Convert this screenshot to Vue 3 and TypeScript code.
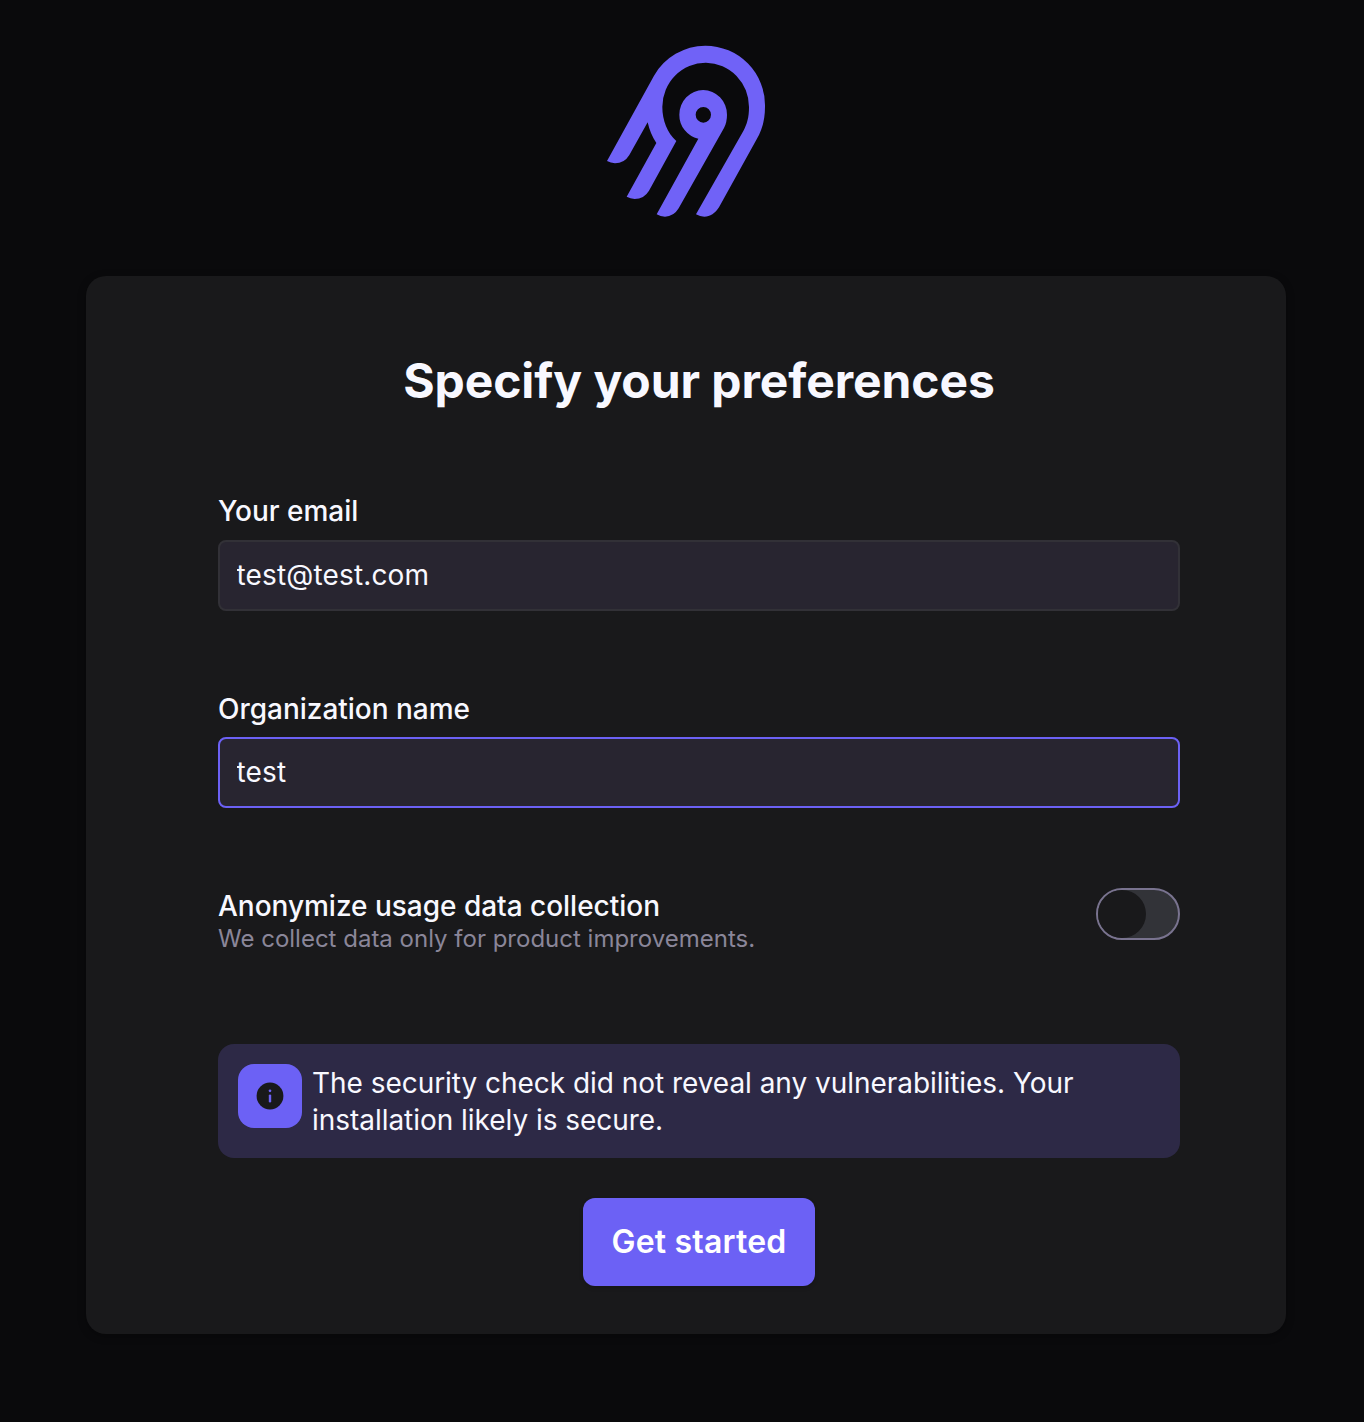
<script setup lang="ts">
import { ref } from 'vue'

const email = ref('test@test.com')
const organization = ref('test')
const anonymize = ref(false)
</script>

<template>
  <main class="page">
    <svg class="logo" viewBox="0 0 600 600" aria-hidden="true">
      <path d="M51 393 L192 137 A179 179 0 0 1 346 47 A179 179 0 0 1 525 230 C525 270 516 300 500 328 L387 532 C376 550 360 560 343 560 Q330 560 318 553 L460 303 C471 283 477 262 477 232 A130 133 0 0 0 217 230 C217 272 232 308 259 333 L177 482 Q162 507 134 507 Q121 506 110 500 L199 339 Q181 313 173 277 L118 375 Q103 400 75 400 Q62 399 51 393 Z" />
      <path fill-rule="evenodd" d="M325 326 A73 73 0 0 1 268 254 A71.5 74 0 0 1 411 254 Q411 277 402 294 L266 535 Q251 560 225 560 Q211 560 200 553 Z M340 231 A23 23.5 0 1 0 340 278 A23 23.5 0 1 0 340 231 Z" />
    </svg>
    <form class="card" @submit.prevent>
      <h1>Specify your preferences</h1>
      <div class="field">
        <label for="email">Your email</label>
        <input id="email" v-model="email" type="text" spellcheck="false" />
      </div>
      <div class="field organization">
        <label for="organization">Organization name</label>
        <input id="organization" v-model="organization" class="active" type="text" spellcheck="false" />
      </div>
      <div class="preference">
        <div>
          <div class="label">Anonymize usage data collection</div>
          <div class="hint">We collect data only for product improvements.</div>
        </div>
        <button class="switch" :class="{ on: anonymize }" type="button" role="switch" :aria-checked="anonymize" aria-label="Anonymize usage data collection" @click="anonymize = !anonymize">
          <span class="knob"></span>
        </button>
      </div>
      <div class="notice">
        <span class="notice-icon">
          <svg viewBox="0 0 28 28" aria-hidden="true">
            <circle cx="14" cy="14" r="13.4" fill="#19191b" />
            <circle cx="14" cy="8.8" r="1.35" fill="#6c61f5" />
            <path d="M14 13.6V19.3" stroke="#6c61f5" stroke-width="2.4" stroke-linecap="round" />
          </svg>
        </span>
        <p>The security check did not reveal any vulnerabilities. Your installation likely is secure.</p>
      </div>
      <button class="submit" type="submit">Get started</button>
    </form>
  </main>
</template>

<style>
body {
  background: #0a0a0c;
}
</style>

<style scoped>
* {
  box-sizing: border-box;
}
.page {
  display: flex;
  flex-direction: column;
  align-items: center;
  height: 1422px;
  padding: 30px 0 0 8px;
  background: #0a0a0c;
  color: #f8f8ff;
  font-family: Inter, sans-serif;
  font-size: 28px;
}
.logo {
  width: 200px;
  height: 200px;
  margin-left: 8px;
  flex: none;
  fill: #7062f7;
}
.card {
  display: flex;
  flex-direction: column;
  width: 1200px;
  height: 1058px;
  margin-top: 46px;
  padding: 76px 106px 48px 132px;
  border-radius: 20px;
  background: #19191b;
  box-shadow: 0 2px 8px rgba(0, 0, 0, 0.3);
}
h1 {
  margin: 0;
  font-size: 48px;
  line-height: 58px;
  font-weight: 700;
  letter-spacing: -0.08px;
  text-align: center;
}
.field {
  display: flex;
  flex-direction: column;
  margin-top: 83px;
}
.organization {
  margin-top: 80px;
}
label,
.label {
  font-weight: 500;
  line-height: 36px;
  letter-spacing: -0.02px;
}
input {
  height: 71px;
  margin-top: 11px;
  padding: 0 16px 2px 16.5px;
  border: 2px solid #323137;
  border-radius: 8px;
  outline: none;
  background: #282530;
  color: inherit;
  font: inherit;
  letter-spacing: 0.15px;
}
input.active {
  margin-top: 10px;
  border-color: #6c61f5;
}
.preference {
  display: flex;
  justify-content: space-between;
  margin-top: 80px;
}
.hint {
  color: #8a8699;
  font-size: 24px;
  line-height: 29px;
}
.switch {
  width: 84px;
  height: 52px;
  padding: 0;
  border: 2px solid #79738f;
  border-radius: 26px;
  background: #323338;
}
.knob {
  display: block;
  width: 48px;
  height: 48px;
  border-radius: 50%;
  background: #19191b;
}
.switch.on .knob {
  margin-left: auto;
}
.notice {
  display: flex;
  gap: 10px;
  height: 114px;
  margin-top: 91px;
  padding: 20px;
  border-radius: 16px;
  background: #2d2946;
}
.notice-icon {
  display: flex;
  align-items: center;
  justify-content: center;
  flex: none;
  width: 64px;
  height: 64px;
  border-radius: 16px;
  background: #6c61f5;
}
.notice-icon svg {
  width: 28px;
  height: 28px;
}
p {
  width: 800px;
  margin: 1px 0 0;
  line-height: 37px;
  letter-spacing: -0.04px;
}
.submit {
  align-self: center;
  width: 232px;
  height: 88px;
  margin-top: 40px;
  padding: 0;
  border: 0;
  border-radius: 12px;
  background: #6c61f5;
  box-shadow: 0 2px 4px rgba(0, 0, 0, 0.15);
  color: #fff;
  font: 600 32px/40px Inter, sans-serif;
  letter-spacing: 0.2px;
}
</style>
